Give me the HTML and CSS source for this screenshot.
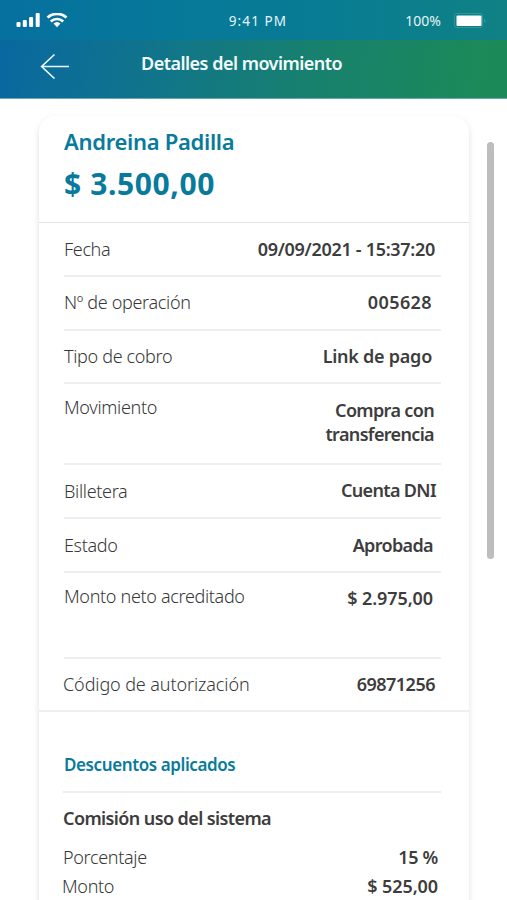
FILE: index.html
```html
<!DOCTYPE html>
<html lang="es">

<head>
	<meta charset="utf-8">
	<title>Detalles del movimiento</title>
	<link rel="stylesheet" href="styles.css">
</head>

<body>
	<div class="status">
		<div class="signal">
			<svg width="52" height="16" viewBox="0 0 52 16" fill="#ffffff">
				<rect x="0.5" y="9" width="4" height="5" rx="1" />
				<rect x="6.8" y="7" width="4" height="7" rx="1" />
				<rect x="13.1" y="4" width="4" height="10" rx="1" />
				<rect x="19.7" y="0" width="4" height="14" rx="1" />
				<g fill="none" stroke="#ffffff" stroke-width="2.7">
					<path d="M31.5 4.6a14 14 0 0 1 19 0" />
					<path d="M34.8 8.4a9.2 9.2 0 0 1 12.4 0" />
				</g>
				<path d="M37.5 10.6a5.3 5.3 0 0 1 7 0L41 14.2z" />
			</svg>
		</div>
		<div class="time">9:41 PM</div>
		<div class="power">
			<span>100%</span>
			<svg width="34" height="16" viewBox="0 0 34 16">
				<rect x="1.5" y="0.5" width="28" height="14" rx="2" fill="none" stroke="#ffffff" stroke-opacity=".15" />
				<rect x="3.5" y="2.5" width="25" height="10.5" rx="1" fill="#ffffff" />
				<path d="M31.5 5.5v4.5q1.6-2.2 0-4.5z" fill="#ffffff" fill-opacity=".4" />
			</svg>
		</div>
	</div>
	<div class="header">
		<svg class="back" width="30" height="26" viewBox="0 0 30 26" fill="none" stroke="#eefaff" stroke-width="1.6">
			<path d="M14.5 1.5L1.6 13.5 14.5 25.5M1.6 13.5h27.4" />
		</svg>
		<h1>Detalles del movimiento</h1>
	</div>
	<div class="content">
		<div class="card">
			<div class="summary">
				<p class="name">Andreina Padilla</p>
				<p class="amount">$ 3.500,00</p>
			</div>
			<div class="details">
				<div class="row fecha"><span class="label">Fecha</span><span class="value number">09/09/2021 - 15:37:20</span></div>
				<div class="row operacion"><span class="label">Nº de operación</span><span class="value number">005628</span></div>
				<div class="row cobro"><span class="label">Tipo de cobro</span><span class="value">Link de pago</span></div>
				<div class="row movimiento"><span class="label">Movimiento</span><span class="value">Compra con<br>transferencia</span></div>
				<div class="row billetera"><span class="label">Billetera</span><span class="value">Cuenta DNI</span></div>
				<div class="row estado"><span class="label">Estado</span><span class="value">Aprobada</span></div>
				<div class="row neto"><span class="label">Monto neto acreditado</span><span class="value number">$ 2.975,00</span></div>
				<div class="row codigo"><span class="label">Código de autorización</span><span class="value number">69871256</span></div>
			</div>
			<div class="discounts">
				<h2>Descuentos aplicados</h2>
				<h3>Comisión uso del sistema</h3>
				<div class="item porcentaje"><span class="label">Porcentaje</span><span class="value number">15 %</span></div>
				<div class="item monto"><span class="label">Monto</span><span class="value number">$ 525,00</span></div>
			</div>
		</div>
		<div class="scrollbar"></div>
	</div>
</body>

</html>
```

FILE: styles.css
```css
* {
	margin: 0;
	padding: 0;
	box-sizing: border-box;
}
body {
	width: 507px;
	height: 900px;
	overflow: hidden;
	font-family: "Noto Sans", "Open Sans", sans-serif;
	font-size: 18px;
	line-height: 24px;
	color: #3d3d3d;
	background-color: #ffffff;
	white-space: nowrap;
}
.status {
	display: grid;
	grid-template-columns: 1fr 1fr 1fr;
	align-items: center;
	height: 40px;
	padding: 1px 20px 0 16px;
	font-size: 14px;
	color: #e4f5f8;
	background: linear-gradient(90deg, #06709f 0%, #067a98 40%, #087c93 65%, #108184 100%);
}
.signal {
	display: flex;
}
.time {
	padding-left: 13px;
	text-align: center;
	font-size: 13.5px;
	letter-spacing: 1.1px;
}
.power {
	display: flex;
	align-items: center;
	justify-content: flex-end;
	gap: 12px;
}
.header {
	display: flex;
	height: 59px;
	padding: 13px 0 0 40px;
	border-bottom: 1px solid #68a9b0;
	background: linear-gradient(100deg, #0968a0 0%, #11758a 32%, #17806f 60%, #1c8a58 95%);
}
.header h1 {
	padding-left: 71px;
	line-height: 20px;
	font-size: 18px;
	font-weight: 600;
	letter-spacing: -.52px;
	color: #f2fcfc;
}
.content {
	display: flex;
	align-items: flex-start;
	height: 801px;
	padding: 17px 0 0 39px;
}
.card {
	width: 430px;
	height: 820px;
	border-radius: 16px 16px 0 0;
	box-shadow: 0 3px 6px rgba(0, 0, 0, .13);
	background-color: #ffffff;
}
.scrollbar {
	width: 7px;
	height: 417px;
	margin: 26px 0 0 18px;
	border-radius: 4px;
	background-color: #bdbdbd;
}
.summary {
	height: 107px;
	padding: 10px 25px 0;
	border-bottom: 1px solid #e2e2e2;
	color: #087b9c;
}
.name {
	line-height: 30px;
	font-size: 22px;
	font-weight: 600;
	letter-spacing: -.3px;
}
.amount {
	line-height: 40px;
	padding-top: 8px;
	font-size: 30px;
	font-weight: 700;
	letter-spacing: .6px;
}
.details {
	height: 489px;
	padding: 0 28px 0 25px;
	border-bottom: 2px solid #efefef;
}
.row {
	display: flex;
	justify-content: space-between;
	height: 54px;
	padding-top: 13px;
	border-bottom: 2px solid #eeeeee;
}
.label {
	font-weight: 300;
	letter-spacing: -.33px;
	color: #383838;
}
.value {
	text-align: right;
	font-weight: 600;
	letter-spacing: -.65px;
}
.number {
	letter-spacing: -.3px;
}
.fecha {
	padding-top: 14px;
}
.fecha .value {
	padding-right: 6px;
}
.operacion .value,
.cobro .value {
	padding-right: 9px;
}
.operacion .value {
	letter-spacing: .4px;
}
.cobro {
	height: 53px;
}
.cobro .value {
	letter-spacing: -.25px;
}
.movimiento {
	height: 81px;
	padding-top: 11px;
}
.movimiento .value {
	padding: 3px 7px 0 0;
}
.billetera .label {
	padding-top: 1px;
}
.billetera .value {
	padding-right: 5px;
}
.estado {
	padding-top: 14px;
}
.estado .value {
	padding-right: 8px;
}
.neto {
	height: 86px;
	padding-top: 11px;
}
.neto .value {
	padding: 2px 8px 0 0;
	letter-spacing: -.1px;
}
.codigo {
	border: none;
}
.codigo .label {
	margin-left: -1px;
	letter-spacing: -.1px;
}
.codigo .value {
	padding-right: 6px;
	letter-spacing: -.5px;
}
.discounts {
	padding: 41px 28px 0 24px;
}
.discounts h2 {
	height: 40px;
	padding-left: 1px;
	border-bottom: 2px solid #eeeeee;
	font-size: 17px;
	font-weight: 600;
	letter-spacing: -.4px;
	color: #087b9c;
}
.discounts h3 {
	padding-top: 13px;
	font-size: 18px;
	font-weight: 600;
	letter-spacing: -.6px;
}
.item {
	display: flex;
	justify-content: space-between;
	padding: 15px 3px 0 0;
}
.monto {
	padding-top: 5px;
}
.monto .label {
	margin-left: -1px;
}
.monto .value {
	letter-spacing: -.1px;
}
```
